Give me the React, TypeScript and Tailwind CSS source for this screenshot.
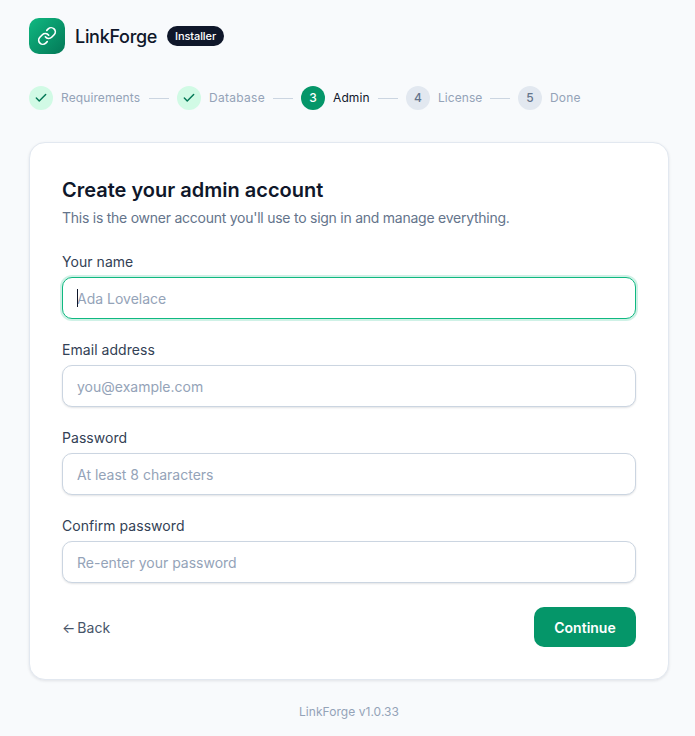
import { Check, Link } from "lucide-react";

const steps = [
  { n: 1, label: "Requirements", state: "done", w: "w-[80px] tracking-[0.1px]" },
  { n: 2, label: "Database", state: "done", w: "w-[56px] tracking-[0.3px]" },
  { n: 3, label: "Admin", state: "active", w: "w-[37px] tracking-[0.1px]" },
  { n: 4, label: "License", state: "todo", w: "w-[44px] tracking-[0.05px]" },
  { n: 5, label: "Done", state: "todo", w: "w-[31px] tracking-[0.2px]" },
];

const fields = [
  { label: "Your name", placeholder: "Ada Lovelace", type: "text", focus: true },
  { label: "Email address", placeholder: "you@example.com", type: "email" },
  { label: "Password", placeholder: "At least 8 characters", type: "password" },
  { label: "Confirm password", placeholder: "Re-enter your password", type: "password" },
];

export default function App() {
  return (
    <div className="min-h-[736px] bg-[#f8fafc] px-[29px] pt-[18px] font-['Inter',sans-serif] text-[#0f172a]">
      <div className="flex h-9 items-center">
        <div className="flex h-9 w-9 items-center justify-center rounded-[10px] bg-gradient-to-br from-[#10b981] to-[#047857]">
          <Link className="h-5 w-5 text-white" strokeWidth={2} />
        </div>
        <span className="ml-[10px] text-[18px] font-medium tracking-[-0.3px]">LinkForge</span>
        <span className="ml-[10px] rounded-full bg-[#0f172a] px-2 py-[2px] text-[11px] font-medium leading-4 tracking-[-0.1px] text-white">
          Installer
        </span>
      </div>

      <div className="mt-[32px] flex h-6 items-center">
        {steps.map((s, i) => (
          <div key={s.n} className="flex items-center">
            {s.state === "done" && (
              <div className="flex h-6 w-6 items-center justify-center rounded-full bg-[#d1fae5] text-[#047857]">
                <Check className="h-[14px] w-[14px]" strokeWidth={2.5} />
              </div>
            )}
            {s.state === "active" && (
              <div className="flex h-6 w-6 items-center justify-center rounded-full bg-[#059669] text-[12px] font-medium text-white">
                {s.n}
              </div>
            )}
            {s.state === "todo" && (
              <div className="flex h-6 w-6 items-center justify-center rounded-full bg-[#e2e8f0] text-[12px] font-medium text-[#64748b]">
                {s.n}
              </div>
            )}
            <span
              className={
                (s.state === "active" ? "text-[#0f172a] " : "text-[#94a3b8] ") +
                "ml-2 whitespace-nowrap text-[12px] " +
                s.w
              }
            >
              {s.label}
            </span>
            {i < steps.length - 1 && <div className="mx-2 h-px w-5 bg-[#cbd5e1]" />}
          </div>
        ))}
      </div>

      <div className="mt-[32px] h-[538px] w-[640px] rounded-2xl border border-[#e2e8f0] bg-white px-8 pt-[33px] shadow-[0_1px_3px_rgba(15,23,42,0.1)]">
        <h1 className="text-[20px] font-semibold leading-[28px]">Create your admin account</h1>
        <p className="mt-[4px] text-[14px] leading-5 tracking-[-0.25px] text-[#64748b]">
          This is the owner account you'll use to sign in and manage everything.
        </p>

        <form className="mt-[24px] flex flex-col gap-[21px]">
          {fields.map((f) => (
            <div key={f.label}>
              <label className="block text-[14px] leading-5 tracking-[0.05px] text-[#334155]">{f.label}</label>
              <div className="relative mt-[5px]">
                <input
                  type={f.type === "password" ? "text" : f.type}
                  placeholder={f.placeholder}
                  className={
                    f.focus
                      ? "block h-[42px] w-full rounded-[10px] border border-[#10b981] bg-white px-[14px] text-[14px] shadow-[0_0_0_2px_rgba(16,185,129,0.2)] outline-none placeholder:text-[#94a3b8]"
                      : "block h-[42px] w-full rounded-[10px] border border-[#cbd5e1] bg-white px-[14px] text-[14px] shadow-[0_1px_2px_rgba(15,23,42,0.12)] outline-none placeholder:text-[#94a3b8]"
                  }
                />
                {f.focus && <span className="absolute left-[15px] top-[12px] h-[18px] w-px bg-[#0f172a]" />}
              </div>
            </div>
          ))}

          <div className="mt-[3px] flex h-10 items-center justify-between">
            <span className="flex items-center gap-[2px] text-[14px] text-[#475569]">
              <span>←</span>
              <span>Back</span>
            </span>
            <button type="button" className="h-10 w-[102px] rounded-[10px] bg-[#059669] text-[14px] font-semibold text-white">
              Continue
            </button>
          </div>
        </form>
      </div>

      <p className="mt-6 w-[640px] text-center text-[12px] leading-4 tracking-[0.05px] text-[#94a3b8]">LinkForge v1.0.33</p>
    </div>
  );
}
